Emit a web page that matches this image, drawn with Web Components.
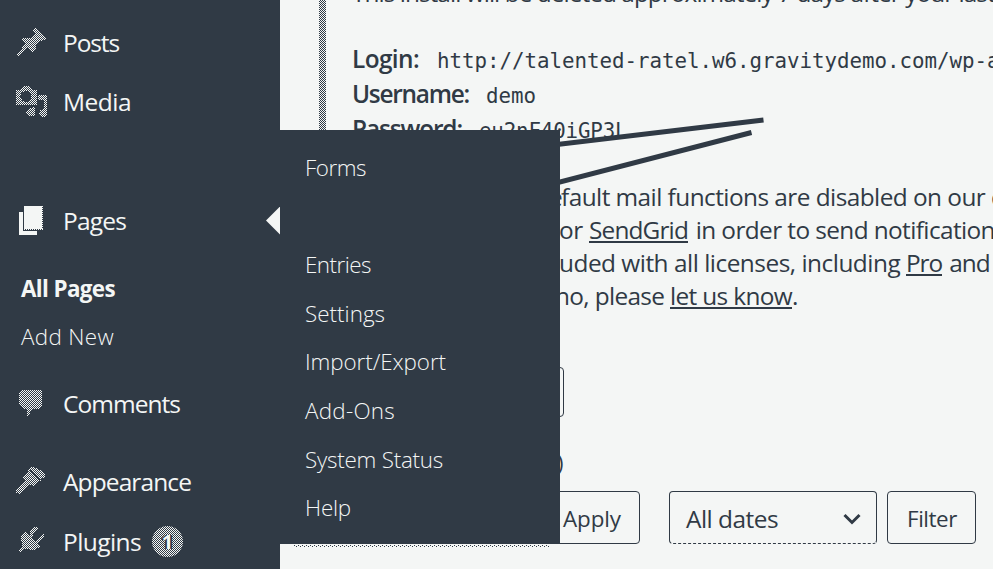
<!DOCTYPE html>
<html lang="en"><head><meta charset="utf-8"><title>Pages</title>
<style>
body{margin:0;width:993px;height:569px;overflow:hidden;background:#f4f6f5}
</style></head><body>
<admin-app></admin-app>
<script>
const define=(name,html,ready)=>customElements.define(name,class extends HTMLElement{
  connectedCallback(){
    if(this.shadowRoot)return;
    const t=document.createElement('template');t.innerHTML=html;
    this.attachShadow({mode:'open'}).appendChild(t.content.cloneNode(true));
    if(ready)ready(this,this.shadowRoot);
  }
});

/* Text whose tracking is adjusted to fill the width given in "w". */
define('fit-text','<style>:host{display:inline-block;white-space:pre;flex:none}span{display:inline-block}</style><span><slot></slot></span>',(el,root)=>{
  const s=root.querySelector('span'),w=+el.getAttribute('w');
  if(w){const n=el.textContent.length;s.style.letterSpacing=((w-s.getBoundingClientRect().width)/n).toFixed(3)+'px';}
});

const shapes={
  pin:'<path fill="url(#d)" d="M19 1H21L30 11V13H27L20 17V22L18 25H16L12 20 2 29 1 28 9 17 6 14V12L8 11H14L19 6 17 3Z"/>',
  media:'<path fill="url(#d)" fill-rule="evenodd" d="M0 4H4L7 0H14L17 4H21V19H0ZM10 5A5.5 5.5 0 1 0 10 16A5.5 5.5 0 0 0 10 5ZM22 9H31V26Q31 31 26 31Q23 30 23 27Q24 23 28 23V14H22ZM17 21H19V29Q17 31 13 30Q9 28 11 25Q13 22 17 21Z"/>',
  pages:'<path fill="#f4f6f5" d="M8 1H26V24H8ZM3 7H7V26H21V30H3Z"/><path stroke="#f4f6f5" stroke-dasharray="1 1" d="M26.5 1V25M8 24.500H27" fill="none"/>',
  comment:'<path fill="url(#d)" d="M5 2H25L26 4V18L23 21H17L12 28H11V21H7L3 17V4Z"/>',
  brush:'<path fill="url(#d)" fill-rule="evenodd" d="M12 4 16 1 21 2 30 8 29 11 24 14 19 20 15 19 12 19 3 28 0 27 0 24 9 15 6 11 8 9 11 8ZM13 5 24 15 25 14 14 4Z"/>',
  plug:'<path fill="url(#d)" d="M9 7 14 11 14 7 18 2 21 1 22 4 17 10 15 12 20 16 26 9 29 9 28 12 22 18 24 22 19 25 9 24 4 28 3 25 6 21 5 10Z"/>'
};
define('menu-icon','<style>:host{display:block;width:32px;height:32px;flex:none}svg{display:block}</style><svg width="32" height="32" shape-rendering="crispEdges"><defs><pattern id="d" width="2" height="2" patternUnits="userSpaceOnUse"><path fill="#f4f6f5" d="M0 0h1v1H0zM1 1h1v1H1z"/></pattern></defs><g></g></svg>',(el,root)=>{
  root.querySelector('g').innerHTML=shapes[el.getAttribute('name')];
});

define('menu-item',`<style>:host{display:flex;height:59px;align-items:center;padding-left:16px;font-size:24.5px;line-height:59px;font-weight:500}
menu-icon{margin-right:15px}::slotted(count-badge){margin-left:11px}::slotted(current-arrow){margin-left:auto}</style>
<menu-icon></menu-icon><slot></slot>`,(el,root)=>{
  const i=root.querySelector('menu-icon'),n=document.createElement('menu-icon');n.setAttribute('name',el.getAttribute('icon'));i.replaceWith(n);
});
define('current-arrow','<style>:host{display:block;width:14px;height:28px;background:#f4f6f5;clip-path:polygon(100% 0,100% 100%,0 50%)}</style>');
define('count-badge',`<style>:host{display:grid;place-items:center;width:31px;height:31px;border-radius:50%;font-size:20px;font-weight:700;line-height:31px;background:conic-gradient(#f4f6f5 25%,#303a45 0 50%,#f4f6f5 0 75%,#303a45 0) 0 0/2px 2px}
span{text-shadow:-1px 0 #303a45,1px 0 #303a45,-2px 0 #303a45,2px 0 #303a45}</style><span><slot></slot></span>`);

define('side-bar',`<style>:host{display:flex;flex-direction:column;width:280px;height:569px;flex:none;background:#303a45;color:#f4f6f5;padding-top:13px;box-sizing:border-box}
.sub{font-size:22.4px;line-height:49px;height:49px;padding-left:21px;flex:none}menu-item{flex:none}.gap{height:60px;flex:none}.s{height:13px;flex:none}.m{height:13px;flex:none}.l{height:19px;flex:none}b{font-weight:700}.bold{line-height:51px}.light{font-weight:300}.last{height:60px}</style>
<menu-item icon="pin"><fit-text w="56">Posts</fit-text></menu-item>
<menu-item icon="media"><fit-text w="68">Media</fit-text></menu-item>
<div class="gap"></div>
<menu-item icon="pages"><fit-text w="63">Pages</fit-text><current-arrow></current-arrow></menu-item>
<div class="s"></div>
<div class="sub bold"><b><fit-text w="94">All Pages</fit-text></b></div>
<div class="sub light"><fit-text w="93">Add New</fit-text></div>
<div class="m"></div>
<menu-item icon="comment"><fit-text w="117">Comments</fit-text></menu-item>
<div class="l"></div>
<menu-item icon="brush"><fit-text w="128">Appearance</fit-text></menu-item>
<menu-item class="last" icon="plug"><fit-text w="78">Plugins</fit-text><count-badge>1</count-badge></menu-item>`);

define('fly-out',`<style>:host{display:flex;flex-direction:column;position:absolute;left:280px;top:130px;width:280px;height:414px;box-sizing:border-box;padding:14px 0 0 25px;background:#303a45;color:#f4f6f5;font-size:22.4px;font-weight:300}
div{height:48.6px;line-height:48.6px;flex:none}.first{margin-bottom:48.6px}
i{position:absolute;left:14px;top:415px;width:256px;height:2px;background:repeating-linear-gradient(90deg,#303a45 0 1px,transparent 1px 4px) 0 0/100% 1px no-repeat,repeating-linear-gradient(90deg,transparent 0 2px,#303a45 2px 3px,transparent 3px 4px) 0 1px/100% 1px no-repeat}</style>
<div class="first"><fit-text w="61">Forms</fit-text></div><div><fit-text w="66">Entries</fit-text></div><div><fit-text w="80">Settings</fit-text></div><div><fit-text w="141">Import/Export</fit-text></div><div><fit-text w="90">Add-Ons</fit-text></div><div><fit-text w="138">System Status</fit-text></div><div><fit-text w="46">Help</fit-text></div><i></i>`);

define('demo-notice',`<style>:host{display:flow-root;box-sizing:border-box;height:367px;margin-left:39px;padding-left:33px;font-size:24.4px;position:relative}
.bar{position:absolute;left:0;top:0;width:7px;height:200px;background:conic-gradient(#303a45 25%,#f4f6f5 0 50%,#303a45 0 75%,#f4f6f5 0) 0 0/2px 2px}
p{margin:0;display:flex;height:35px;line-height:35px;white-space:pre}
.top{margin-top:-25px}.login{margin-top:31px}.cred{font-weight:600}
code{font:20.8px/35px "DejaVu Sans Mono",monospace;letter-spacing:-.02px;padding-top:3px}
.body{height:33px;line-height:33px}.b1{margin-top:34px}
a{border-bottom:2px solid #303a45;height:28px}.in{margin-left:2px}
svg{position:absolute;left:200px;top:100px}</style>
<div class="bar"></div>
<p class="top"><fit-text w="704">This install will be deleted approximately 7 days after your last login.</fit-text></p>
<p class="login"><fit-text class="cred" w="67">Login:</fit-text><code style="margin-left:18px">http://talented-ratel.w6.gravitydemo.com/wp-admin</code></p>
<p><fit-text class="cred" w="117">Username:</fit-text><code style="margin-left:17px">demo</code></p>
<p><fit-text class="cred" w="110">Password:</fit-text><code style="margin-left:17px;letter-spacing:-.15px">eu2nF40iGP3L</code></p>
<p class="body b1" style="margin-left:184px"><fit-text w="25">de</fit-text><fit-text w="430">fault mail functions are disabled on our </fit-text><span>demo</span></p>
<p class="body" style="margin-left:207px"><fit-text w="30">or </fit-text><a><fit-text w="99">SendGrid</fit-text></a><fit-text class="in" w="316"> in order to send notifications</fit-text></p>
<p class="body" style="margin-left:207px"><fit-text w="347">uded with all licenses, including </fit-text><a><fit-text w="36">Pro</fit-text></a><fit-text class="in" w="51"> and </fit-text></p>
<p class="body" style="margin-left:203px"><fit-text w="115">no, please </fit-text><a><fit-text w="122">let us know</fit-text></a><span>.</span></p>
<svg width="300" height="100"><path d="M0 49 244.500 20M0 92.700 232.500 32.500" fill="none" stroke="#303a45" stroke-width="5"/></svg>`);

define('form-control',`<style>:host{display:flex;box-sizing:border-box;height:53px;border:1px solid #303a45;border-radius:4px;font-size:22.4px;line-height:53px;align-items:center;padding-top:2px}
:host([select]){font-size:24.4px;border-bottom-style:dashed}svg{margin-left:auto;margin-right:15px}svg[hidden]{display:none}</style><slot></slot><svg hidden width="18" height="12"><path d="M1.500 2 9 9.500 16.500 2" fill="none" stroke="#303a45" stroke-width="3"/></svg>`,(el,root)=>{
  if(el.hasAttribute('select'))root.querySelector('svg').removeAttribute('hidden');
});

define('list-tools',`<style>:host{display:flex;flex-direction:column;padding-left:200px}
.add{width:84px;height:50px;margin-bottom:30px}.count{font-size:22px;line-height:30px;height:30px;margin:0 0 14px 77px}
.row{display:flex;box-sizing:border-box}
.apply{width:120px;padding-left:42px;box-sizing:border-box;margin:0 29px 0 40px}.dates{width:208px;padding-left:16px;margin-right:10px}.filter{width:89px;padding-left:19px}</style>
<form-control class="add"></form-control><div class="count">)</div>
<div class="row"><form-control class="apply"><fit-text w="58">Apply</fit-text></form-control><form-control class="dates" select><fit-text w="92">All dates</fit-text></form-control><form-control class="filter"><fit-text w="50">Filter</fit-text></form-control></div>`);

define('admin-app',`<style>:host{display:flex;position:relative;width:993px;height:569px;overflow:hidden;background:#f4f6f5;color:#303a45;font-family:"Open Sans","Noto Sans",sans-serif}
main{width:713px;height:569px;overflow:hidden}</style>
<side-bar></side-bar><main><demo-notice></demo-notice><list-tools></list-tools></main><fly-out></fly-out>`);
</script></body></html>
